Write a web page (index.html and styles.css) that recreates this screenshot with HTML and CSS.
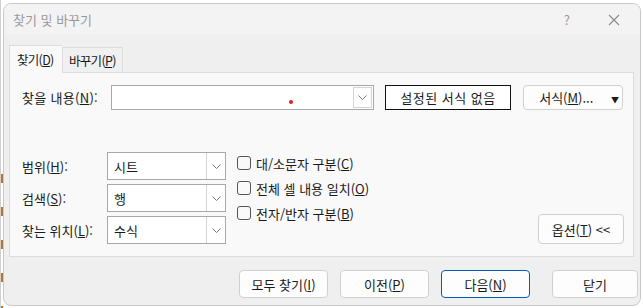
FILE: index.html
```html
<!DOCTYPE html>
<html lang="ko">
<head>
    <meta charset="UTF-8">
    <title>찾기 및 바꾸기</title>
    <link rel="stylesheet" href="styles.css">
</head>
<body>
    <div class="dialog">
        <div class="title-bar">
            <span class="title">찾기 및 바꾸기</span>
            <span class="help">?</span>
            <svg class="close-x" width="12" height="12" viewBox="0 0 12 12">
                <path d="M1 1 L11 11 M11 1 L1 11" stroke="#8a8a8a" stroke-width="1.1" fill="none"/>
            </svg>
        </div>

        <div class="tabs">
            <div class="tab active">찾기(<u>D</u>)</div>
            <div class="tab">바꾸기(<u>P</u>)</div>
        </div>

        <div class="panel">
            <div class="find-row">
                <label class="find-label">찾을 내용(<u>N</u>):</label>
                <div class="combo">
                    <div class="combo-text"><span class="red-dot"></span></div>
                    <div class="combo-arrow">
                        <svg width="9" height="5" viewBox="0 0 9 5"><path d="M0.5 0.5 L4.5 4.5 L8.5 0.5" stroke="#777" fill="none"/></svg>
                    </div>
                </div>
                <div class="format-preview">설정된 서식 없음</div>
                <button class="btn format-btn">서식(<u>M</u>)... <span class="caret">▼</span></button>
            </div>

            <div class="options">
                <div class="selects">
                    <div class="select-row">
                        <span class="opt-label">범위(<u>H</u>):</span>
                        <div class="select"><span>시트</span><div class="select-arrow"><svg width="9" height="5" viewBox="0 0 9 5"><path d="M0.5 0.5 L4.5 4.5 L8.5 0.5" stroke="#777" fill="none"/></svg></div></div>
                    </div>
                    <div class="select-row">
                        <span class="opt-label">검색(<u>S</u>):</span>
                        <div class="select"><span>행</span><div class="select-arrow"><svg width="9" height="5" viewBox="0 0 9 5"><path d="M0.5 0.5 L4.5 4.5 L8.5 0.5" stroke="#777" fill="none"/></svg></div></div>
                    </div>
                    <div class="select-row">
                        <span class="opt-label">찾는 위치(<u>L</u>):</span>
                        <div class="select"><span>수식</span><div class="select-arrow"><svg width="9" height="5" viewBox="0 0 9 5"><path d="M0.5 0.5 L4.5 4.5 L8.5 0.5" stroke="#777" fill="none"/></svg></div></div>
                    </div>
                </div>

                <div class="checks">
                    <div class="check"><span class="box"></span>대/소문자 구분(<u>C</u>)</div>
                    <div class="check"><span class="box"></span>전체 셀 내용 일치(<u>O</u>)</div>
                    <div class="check"><span class="box"></span>전자/반자 구분(<u>B</u>)</div>
                </div>

                <button class="btn options-btn">옵션(<u>T</u>) &lt;&lt;</button>
            </div>
        </div>

        <div class="footer">
            <button class="btn">모두 찾기(<u>I</u>)</button>
            <button class="btn">이전(<u>P</u>)</button>
            <button class="btn primary">다음(<u>N</u>)</button>
            <button class="btn close-btn">닫기</button>
        </div>
    </div>
</body>
</html>
```

FILE: styles.css
```css
body {
    margin: 0;
    padding: 3px 0 0 3px;
    width: 643px;
    height: 308px;
    box-sizing: border-box;
    overflow: hidden;
    font-family: "Noto Sans CJK KR", "Noto Sans", sans-serif;
    font-size: 13px;
    color: #1a1a1a;
    background-color: #fff;
    background-image:
        repeating-linear-gradient(to bottom, transparent 0, transparent 24px, #b8742a 24px, #b8742a 33px),
        linear-gradient(to right, #d0d0d0, #d0d0d0);
    background-size: 2px 100%, 1px 100%;
    background-repeat: no-repeat;
    background-position: 1px 150px, 0 0;
}

.dialog {
    width: 638px;
    height: 303px;
    background-color: #efefef;
    border: 1px solid #c9c9c9;
    border-radius: 8px;
    box-sizing: border-box;
    overflow: hidden;
}

.title-bar {
    height: 31px;
    display: flex;
    align-items: center;
    background-color: #f3f3f3;
    padding: 0 20px 0 9px;
}

.title {
    flex: 1;
    color: #9a9a9a;
    font-size: 13px;
}

.help {
    color: #9a9a9a;
    font-size: 13px;
    margin-right: 38px;
}

.tabs {
    display: flex;
    align-items: flex-end;
    padding: 9px 0 0 5px;
    height: 28px;
}

.tab {
    height: 25px;
    padding: 0 6px;
    display: flex;
    align-items: center;
    border: 1px solid #dcdcdc;
    border-bottom: none;
    box-sizing: border-box;
    background-color: #f0f0f0;
    white-space: nowrap;
    font-size: 12.5px;
    letter-spacing: -0.7px;
}

.tab.active {
    height: 28px;
    width: 53px;
    padding: 0 7px;
    background-color: #f9f9f9;
    border-right: none;
    margin-bottom: -1px;
    position: relative;
    z-index: 1;
}

.panel {
    margin-left: 5px;
    width: 625px;
    height: 185px;
    box-sizing: border-box;
    border: 1px solid #dcdcdc;
    background-color: #f9f9f9;
    padding: 12px 9px 0 12px;
}

.find-row {
    display: flex;
    align-items: center;
    height: 25px;
}

.find-label {
    width: 89px;
    letter-spacing: 0.3px;
}

.combo {
    width: 263px;
    height: 25px;
    box-sizing: border-box;
    border: 1px solid #a8a8a8;
    background-color: #fff;
    display: flex;
}

.combo-text {
    flex: 1;
    position: relative;
}

.red-dot {
    position: absolute;
    left: 177px;
    top: 14px;
    width: 4px;
    height: 4px;
    border-radius: 50%;
    background-color: #e02020;
}

.combo-arrow {
    width: 17px;
    margin: 1px;
    border: 1px solid #d4d4d4;
    display: flex;
    align-items: center;
    justify-content: center;
}

.format-preview {
    margin-left: 11px;
    width: 126px;
    height: 25px;
    box-sizing: border-box;
    border: 1px solid #111;
    background-color: #fff;
    display: flex;
    align-items: center;
    justify-content: center;
    letter-spacing: 0.5px;
}

.btn {
    font-family: inherit;
    font-size: 13px;
    color: #1a1a1a;
    background-color: #fdfdfd;
    border: 1px solid #d0d0d0;
    border-radius: 4px;
    height: 28px;
    padding: 0;
}

.format-btn {
    margin-left: 12px;
    width: 100px;
    height: 25px;
    text-align: right;
    padding-right: 3px;
}

.caret {
    font-size: 8px;
    margin-left: 14px;
}

.options {
    display: flex;
    margin-top: 42px;
}

.selects {
    display: flex;
    flex-direction: column;
    gap: 4px;
}

.select-row {
    display: flex;
    align-items: center;
}

.opt-label {
    width: 85px;
}

.select {
    width: 119px;
    height: 28px;
    box-sizing: border-box;
    border: 1px solid #a8a8a8;
    background-color: #fff;
    display: flex;
    align-items: center;
}

.select span {
    flex: 1;
    padding-left: 6px;
}

.select-arrow {
    width: 18px;
    align-self: stretch;
    border-left: 1px solid #d4d4d4;
    display: flex;
    align-items: center;
    justify-content: center;
}

.checks {
    margin-left: 11px;
    margin-top: 1px;
    display: flex;
    flex-direction: column;
    gap: 5px;
}

.check {
    display: flex;
    align-items: center;
    height: 20px;
}

.box {
    width: 12px;
    height: 12px;
    border: 1px solid #555;
    border-radius: 3px;
    margin-right: 5px;
    background-color: #f9f9f9;
}

.options-btn {
    margin-left: auto;
    align-self: flex-end;
    width: 86px;
    height: 30px;
}

.footer {
    display: flex;
    padding: 13px 0 0 235px;
}

.footer .btn {
    width: 89px;
    margin-right: 12px;
}

.footer .btn.primary {
    border-color: #005fb8;
    margin-right: 22px;
}

.footer .close-btn {
    width: 86px;
    margin-right: 0;
}
```
